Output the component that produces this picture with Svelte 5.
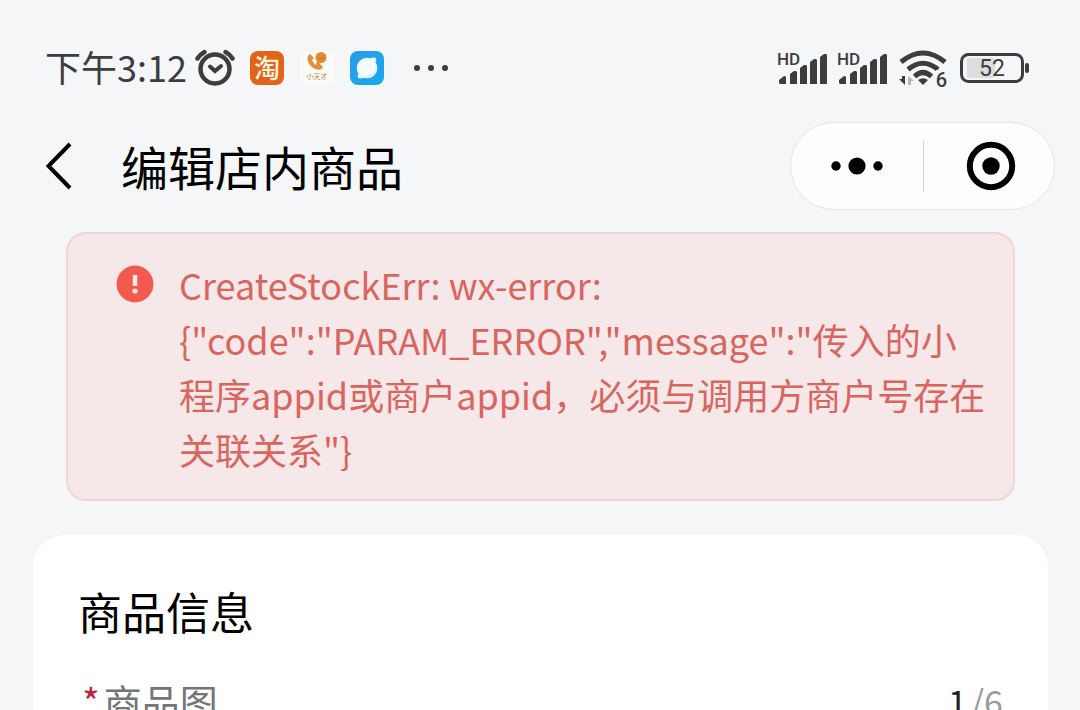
<script lang="ts">
  export let time: string = '下午3:12';
  export let battery: number = 52;
  export let title: string = '编辑店内商品';
  export let error: string =
    'CreateStockErr: wx-error: {"code":"PARAM_ERROR","message":"传入的小程序appid或商户appid，必须与调用方商户号存在关联关系"}';
  export let imageCount: number = 1;

  const MAX_IMAGES = 6;
  const sims = [0, 1];
</script>

<div class="page">
  <div class="status">
    <span class="time">{time}</span>
    <svg class="alarm" width="40" height="38" viewBox="0 0 40 38" fill="none" stroke="#3c3d3f" stroke-linecap="round">
      <circle cx="20" cy="20" r="14.5" stroke-width="4.5" />
      <path d="M2.500 9.500Q5 5.500 9.500 3M37.500 9.500Q35 5.500 30.500 3" stroke-width="4.500" />
      <path d="M15 17.500l5 4.500 6-5" stroke-width="4" />
    </svg>
    <span class="app taobao">淘</span>
    <span class="app genius">
      <svg width="24" height="20" viewBox="0 0 24 20">
        <path d="M5 3C1 5 2 12 7 16s10 3 11 0l-4-4-3 2c-2-1-3-3-4-5l2-2z" fill="#e0913a" />
        <circle cx="16" cy="6.500" r="5.500" fill="#e58a2c" />
        <path d="M12 10l-1 4 5-2z" fill="#e58a2c" />
        <path d="M13 7q3 1.500 6-.5" stroke="#c86f1c" fill="none" />
      </svg>
      <small>小天才</small>
    </span>
    <svg class="browser" width="34" height="34" viewBox="0 0 34 34">
      <defs>
        <linearGradient id="sky" x1="0" y1="0" x2="1" y2="1">
          <stop offset="0" stop-color="#2c9ae8" />
          <stop offset="1" stop-color="#16a9ee" />
        </linearGradient>
      </defs>
      <rect width="34" height="34" rx="8" fill="url(#sky)" />
      <circle cx="17" cy="17" r="10.300" fill="#f3fbff" />
      <path d="M20 7.200q5-1.500 6 .3t-.5 4zM14 26.800q-5 1.500-6-.3t.5-4z" fill="#e5f6ff" />
      <path d="M27.300 17q-5 7-14 9.500a10.300 10.300 0 0 0 14-9.500z" fill="#d5f0fd" />
    </svg>
    <svg class="more" width="36" height="8" viewBox="0 0 36 8" fill="#3c3d3f">
      <circle cx="4" cy="4" r="3" /><circle cx="18" cy="4" r="3" /><circle cx="32" cy="4" r="3" />
    </svg>

    <div class="signals">
      {#each sims as sim (sim)}
        <span class="signal">
          <svg width="50" height="34" viewBox="0 0 50 34" fill="#3c3d3f">
            <path d="M2 32v-3l5-4h1l1 1v7H3zM13 33V23l4-3h2l1 1v12zM23 33V17l4-3h2l1 1v18zM33 33V11l4-3h2l1 1v24zM43 33V6l4-3h2l1 1v29z" />
          </svg>
          <b>HD</b>
        </span>
      {/each}
      <span class="wifi">
        <svg width="48" height="36" viewBox="0 0 48 36" fill="none" stroke="#3c3d3f" stroke-width="5">
          <path d="M2 12Q24-6 46 12M9 19.500Q24 7 39 19.500M15.500 26.500Q24 18.500 32.500 26.500" />
          <path d="M24 35l-5-5q5-3.500 10 0z" fill="#3c3d3f" stroke="none" />
          <path d="M6 26v9l-6-6h3v-3z" fill="#3c3d3f" stroke="none" />
          <path d="M9 35v-9l6 5h-3v4z" fill="#b4b5b7" stroke="none" />
        </svg>
        <b>6</b>
      </span>
      <span class="battery">
        <svg width="70" height="30" viewBox="0 0 70 30">
          <rect x="7" y="5" width="28" height="20" rx="3" fill="#dcddde" />
          <rect x="1.500" y="1.500" width="61" height="27" rx="7" fill="none" stroke="#3c3d3f" stroke-width="3" />
          <rect x="65" y="10" width="4" height="10" rx="2" fill="#3c3d3f" />
        </svg>
        <span>{battery}</span>
      </span>
    </div>
  </div>

  <header class="nav">
    <button class="back" aria-label="返回">
      <svg width="28" height="48" viewBox="0 0 28 48" fill="none" stroke="#000" stroke-width="4">
        <path d="M25 2L3.500 24 25 46" />
      </svg>
    </button>
    <h1>{title}</h1>
    <div class="capsule">
      <button aria-label="更多">
        <svg width="54" height="20" viewBox="0 0 54 20">
          <circle cx="6" cy="10" r="4.700" /><circle cx="27" cy="10" r="8.600" /><circle cx="48" cy="10" r="4.700" />
        </svg>
      </button>
      <button class="close" aria-label="关闭">
        <svg width="50" height="50" viewBox="0 0 50 50">
          <circle cx="25" cy="25" r="21.200" fill="none" stroke="#000" stroke-width="6" />
          <circle cx="25" cy="25" r="8.700" />
        </svg>
      </button>
    </div>
  </header>

  <div class="alert" role="alert">
    <svg width="38" height="38" viewBox="0 0 38 38">
      <circle cx="19" cy="19" r="18.500" fill="#f25a50" />
      <path d="M19 10v11" stroke="#fbe9e8" stroke-width="4.500" />
      <circle cx="19" cy="26" r="2.600" fill="#fbe9e8" />
    </svg>
    <p>{error}</p>
  </div>

  <section class="card">
    <h2>商品信息</h2>
    <div class="field">
      <span class="label"><i>*</i>商品图</span>
      <span class="count"><b>{imageCount}</b>/{MAX_IMAGES}</span>
    </div>
  </section>
</div>

<style>
  :global(body) {
    background: #f5f6f8;
  }

  .page {
    height: 100vh;
    overflow: hidden;
    box-sizing: border-box;
    padding-top: 40px;
    background: #f5f6f8;
    color: #000;
    font-family: 'Noto Sans CJK SC', sans-serif;
  }

  svg {
    display: block;
    flex: none;
  }

  .status {
    display: flex;
    align-items: center;
    height: 56px;
    padding: 0 50px 0 45px;
    color: #3c3d3f;
  }
  .time {
    padding-bottom: 4px;
    font-size: 36px;
    line-height: 52px;
  }
  .alarm { margin-left: 8px; }
  .app {
    width: 34px;
    height: 34px;
    border-radius: 8px;
    text-align: center;
  }
  .taobao {
    margin-left: 15px;
    background: #e2641b;
    color: #fff3df;
    font-size: 26px;
    font-weight: 500;
    line-height: 32px;
  }
  .genius {
    display: flex;
    flex-direction: column;
    align-items: center;
    margin-left: 16px;
    background: #fafafa;
    color: #c58a45;
  }
  .genius small {
    font-size: 7px;
    line-height: 10px;
  }
  .browser { margin-left: 16px; }
  .more { margin-left: 29px; }

  .signals {
    display: flex;
    align-items: center;
    margin-left: auto;
  }
  .signal {
    position: relative;
    margin-right: 10px;
  }
  .signal b {
    position: absolute;
    top: -2px;
    left: 0;
    font-family: Roboto, sans-serif;
    font-size: 17px;
    font-weight: 500;
    line-height: 20px;
  }
  .wifi {
    position: relative;
    margin-left: 2px;
  }
  .wifi b {
    position: absolute;
    right: 0;
    bottom: -4px;
    background: #f5f6f8;
    font-family: Roboto, sans-serif;
    font-size: 20px;
    font-weight: 500;
    line-height: 20px;
  }
  .battery {
    position: relative;
    margin-left: 13px;
  }
  .battery span {
    position: absolute;
    inset: 0 6px 0 0;
    text-align: center;
    font-family: Roboto, sans-serif;
    font-size: 23px;
    line-height: 32px;
  }

  button {
    display: flex;
    align-items: center;
    justify-content: center;
    padding: 0;
    border: 0;
    background: none;
    cursor: pointer;
  }

  .nav {
    display: flex;
    align-items: center;
    margin-top: 26px;
    padding: 0 25px 0 45px;
  }
  h1 {
    margin: 0 0 0 48px;
    font-size: 47px;
    font-weight: 400;
    line-height: 64px;
  }
  .capsule {
    display: flex;
    align-items: center;
    box-sizing: border-box;
    width: 265px;
    height: 88px;
    margin-left: auto;
    border: 1px solid #e4e5e7;
    border-radius: 44px;
    background: #fdfdfe;
  }
  .capsule button {
    box-sizing: border-box;
    width: 50%;
    height: 52px;
  }
  .capsule .close {
    padding-left: 4px;
    border-left: 1px solid #d5d6d8;
  }

  .alert {
    display: flex;
    gap: 25px;
    box-sizing: border-box;
    margin: 22px 65px 0 66px;
    padding: 23px 24px 22px 48px;
    border: 2px solid #efd6d5;
    border-radius: 20px;
    background: #f6e8e8;
    color: #d9655f;
  }
  .alert svg { margin-top: 8px; }
  .alert p {
    margin: 0;
    font-size: 36px;
    line-height: 55px;
  }

  .card {
    margin: 34px 32px 0 33px;
    padding: 44px 45px;
    border-radius: 32px;
    background: #fff;
  }
  h2 {
    margin: 0;
    font-size: 44px;
    font-weight: 400;
    line-height: 64px;
  }
  .field {
    display: flex;
    justify-content: space-between;
    margin-top: 30px;
    color: #747577;
    font-size: 38px;
    line-height: 56px;
  }
  .label {
    padding-left: 4px;
  }
  .label i {
    margin-right: 4px;
    color: #c4203c;
    font-style: normal;
  }
  .count {
    color: #999b9e;
    font-size: 34px;
  }
  .count b {
    margin-right: 4px;
    color: #222;
    font-weight: 400;
  }
</style>
